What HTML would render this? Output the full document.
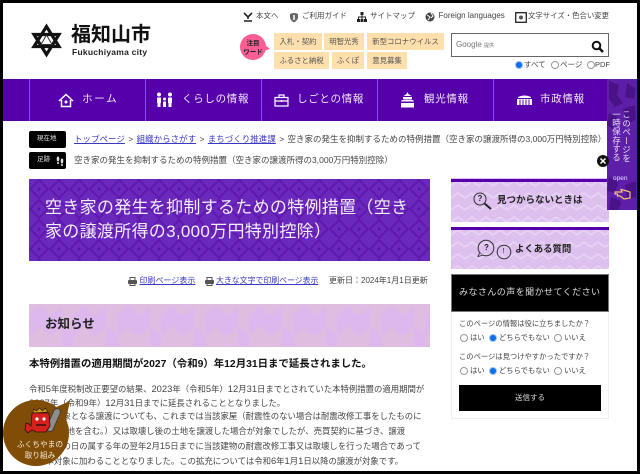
<!DOCTYPE html>
<html lang="ja"><head><meta charset="utf-8"><title>空き家の発生を抑制するための特例措置</title>
<style>
html,body{margin:0;padding:0;background:#000;}
#p{position:relative;width:640px;height:474px;overflow:hidden;background:#000;font-family:"Liberation Sans","Noto Sans CJK JP",sans-serif;color:#333;}
#w{position:absolute;left:3px;top:3px;width:634px;height:468px;background:#fff;}
.a{position:absolute;white-space:nowrap;line-height:1;}
.t{font-size:7.500px;color:#444;}
.k{position:absolute;background:#ffe0ad;font-size:7.400px;color:#555;height:17px;line-height:17px;text-align:center;white-space:nowrap;}
.n{position:absolute;font-size:10.500px;color:#f0e8f8;letter-spacing:.7px;white-space:nowrap;line-height:1;top:94px;}
.s{position:absolute;top:79px;width:1px;height:42px;background:#8a55c8;}
.l{color:#3a3ac0;text-decoration:underline;}
.bc{font-size:8.500px;color:#444;}
.g{margin:0 1px;}
svg{position:absolute;overflow:visible;}
.r{position:absolute;width:6px;height:6px;border-radius:50%;border:1px solid #999;background:#fff;box-sizing:content-box;}
.r.on{background:#0a6fe8;border-color:#9cc2ee;}
.q{font-size:7.300px;color:#444;}
.body{font-size:8.400px;color:#444;left:29px;}
.d{font-size:9.400px;}
</style></head><body><div id="p"><div id="w"></div>

<!-- logo -->
<svg style="left:26px;top:18px" width="44" height="44" viewBox="0 0 44 44"><path d="M20.500 8.500 33 28.500H8Z M20.500 36.500 33 16.500H8Z" fill="none" stroke="#111" stroke-width="3.200"/><path d="M20.500 17 26 26.500H15Z" fill="none" stroke="#333" stroke-width="1"/></svg>
<div class="a" style="left:71px;top:25px;font-size:20px;font-weight:bold;color:#111;">福知山市</div>
<div class="a" style="left:72px;top:48px;font-size:8.500px;font-weight:bold;color:#222;letter-spacing:.25px;">Fukuchiyama city</div>

<!-- top links -->
<svg style="left:243px;top:12px" width="10" height="10"><path d="M1 1 5 5 9 1M5 5V7M1 9H9" fill="none" stroke="#222" stroke-width="1.600"/></svg>
<div class="a t" style="left:256px;top:12px;">本文へ</div>
<svg style="left:289px;top:12px" width="10" height="11"><path d="M1 2Q5 0 9 2V6Q8 9 5 10.500 2 9 1 6Z" fill="#666"/><path d="M5 3V8" stroke="#fff" stroke-width="1.500"/></svg>
<div class="a t" style="left:302px;top:12px;">ご利用ガイド</div>
<svg style="left:357px;top:12px" width="10" height="11"><path d="M3.500 0h3v3h-3zM0 7h3v3H0zM3.500 7h3v3h-3zM7 7h3v3H7z" fill="#222"/><path d="M5 3v4M1.500 7V5h7v2" fill="none" stroke="#222"/></svg>
<div class="a t" style="left:370px;top:12px;">サイトマップ</div>
<svg style="left:425px;top:12px" width="10" height="10"><circle cx="5" cy="5" r="4.500" fill="#444"/><path d="M2 3 5 5 3 8M6 1 8 4 6 6" fill="none" stroke="#fff"/></svg>
<div class="a" style="left:438.500px;top:12px;font-size:8px;color:#444;">Foreign languages</div>
<svg style="left:515px;top:12px" width="12" height="11"><rect x=".7" y=".7" width="10.600" height="9.600" fill="none" stroke="#222" stroke-width="1.300"/><circle cx="6" cy="5.500" r="2" fill="#555"/></svg>
<div class="a" style="left:528px;top:12px;font-size:7.400px;color:#444;">文字サイズ・色合い変更</div>

<!-- keywords -->
<svg style="left:240px;top:33px" width="32" height="29"><circle cx="13" cy="14" r="13" fill="#fb5e93"/><path d="M24 11l6 5-7 2Z" fill="#fb5e93"/></svg>
<div class="a" style="left:240px;top:39px;width:26px;text-align:center;font-size:6.500px;font-weight:bold;color:#222;line-height:9px;white-space:normal;">注目<br>ワード</div>
<div class="k" style="left:274px;top:33px;width:48px;">入札・契約</div>
<div class="k" style="left:324px;top:33px;width:40px;">明智光秀</div>
<div class="k" style="left:367px;top:33px;width:77px;">新型コロナウイルス</div>
<div class="k" style="left:274px;top:52px;width:55px;">ふるさと納税</div>
<div class="k" style="left:332px;top:52px;width:32px;">ふくぽ</div>
<div class="k" style="left:367px;top:52px;width:40px;">意見募集</div>

<!-- search -->
<div style="position:absolute;left:451px;top:33px;width:156px;height:22px;border:1px solid #666;box-sizing:content-box;background:#fff;"></div>
<div class="a" style="left:456px;top:41px;font-size:8px;color:#777;">Google <span style="font-size:5px;">提供</span></div>
<svg style="left:591px;top:40px" width="13" height="13"><circle cx="5.500" cy="5.500" r="3.800" fill="none" stroke="#111" stroke-width="2"/><path d="M8.500 8.500 12 12" stroke="#111" stroke-width="2.500"/></svg>
<div class="r on" style="left:515px;top:61px"></div><div class="a t" style="left:524px;top:61px;">すべて</div>
<div class="r" style="left:551px;top:61px"></div><div class="a t" style="left:560px;top:61px;">ページ</div>
<div class="r" style="left:587px;top:61px"></div><div class="a t" style="left:595px;top:61px;">PDF</div>

<!-- nav -->
<div style="position:absolute;left:3px;top:79px;width:604px;height:42px;background:#5500aa;"></div>
<div class="s" style="left:29px"></div><div class="s" style="left:145px"></div><div class="s" style="left:261px"></div><div class="s" style="left:377px"></div><div class="s" style="left:493px"></div>
<svg style="left:58px;top:93px" width="16" height="15"><path d="M1 8 8 1.500 15 8M3.500 7V13.500H12.500V7" fill="none" stroke="#fff" stroke-width="1.500"/><circle cx="8" cy="9" r="1.500" fill="#fff"/></svg>
<div class="n" style="left:82px;letter-spacing:1.700px;">ホーム</div>
<svg style="left:156px;top:92px" width="17" height="16" fill="#fff"><circle cx="3" cy="2.500" r="2"/><circle cx="14" cy="2.500" r="2"/><circle cx="8.500" cy="7" r="1.500"/><path d="M1 5.500h4V11H4.500v4h-3v-4H1zM12 5.500h4V11h-.5v4h-3v-4H12zM7 9.500h3V15H7z"/></svg>
<div class="n" style="left:182px;">くらしの情報</div>
<svg style="left:274px;top:93px" width="15" height="14"><path d="M1 4.500H14V13H1ZM1 8H14M5 4.500V2H10V4.500M7.500 7V9" fill="none" stroke="#fff" stroke-width="1.200"/></svg>
<div class="n" style="left:297px;">しごとの情報</div>
<svg style="left:400px;top:92px" width="15" height="16" fill="#fff"><path d="M7.500 0 8.500 2 11.500 4H3.500L6.500 2ZM3 5h9v2H3zM1.500 8.500 4 7.500h7l2.500 1 .5 1H1zM1 11h13v4.500H1z"/></svg>
<div class="n" style="left:424px;">観光情報</div>
<svg style="left:517px;top:95px" width="15" height="10" fill="#fff"><path d="M1 2Q7.500-1 14 2V3H1zM0 4h15V10H0z"/><path d="M3 4.500v5.500M6 4.500v5.500M9 4.500v5.500M12 4.500v5.500" stroke="#5500aa" stroke-width="1"/></svg>
<div class="n" style="left:540px;">市政情報</div>

<!-- breadcrumb -->
<div style="position:absolute;left:29px;top:131px;width:37px;height:17px;background:#000;border-radius:2px;"></div>
<div class="a" style="left:37px;top:136px;font-size:6.500px;color:#ddd;">現在地</div>
<div class="a bc" style="left:74px;top:135px;"><span class="l">トップページ</span> <span class="g">&gt;</span> <span class="l">組織からさがす</span> <span class="g">&gt;</span> <span class="l">まちづくり推進課</span> <span class="g">&gt;</span> 空き家の発生を抑制するための特例措置（空き家の譲渡所得の3,000万円特別控除）</div>
<div style="position:absolute;left:29px;top:152px;width:37px;height:17px;background:#000;border-radius:2px;"></div>
<div class="a" style="left:37px;top:157px;font-size:6.500px;color:#ddd;">足跡</div>
<svg style="left:56px;top:156px" width="8" height="10" fill="#ddd"><ellipse cx="2" cy="3" rx="1.300" ry="2.500"/><ellipse cx="6" cy="5" rx="1.300" ry="2.500"/><circle cx="2" cy="7" r="1"/><circle cx="6" cy="9" r="1"/></svg>
<div class="a bc" style="left:74px;top:156px;">空き家の発生を抑制するための特例措置（空き家の譲渡所得の3,000万円特別控除）</div>

<!-- title -->
<svg style="left:29px;top:179px" width="401" height="82"><defs><pattern id="d" width="20" height="20" patternUnits="userSpaceOnUse"><rect width="20" height="20" fill="#6a28bc"/><path d="M10 1 19 10 10 19 1 10Z" fill="none" stroke="#6018ae" stroke-width="2"/><circle cx="10" cy="10" r="1.500" fill="#5c14aa"/></pattern></defs><rect width="401" height="82" fill="url(#d)"/></svg>
<div class="a" style="left:45px;top:196px;font-size:17px;color:#f3ecfb;letter-spacing:.3px;line-height:24px;">空き家の発生を抑制するための特例措置（空き<br>家の譲渡所得の3,000万円特別控除）</div>

<!-- print row -->
<svg style="left:128px;top:277px" width="9" height="9"><rect x="0" y="3" width="9" height="4" rx="1" fill="#555"/><rect x="2" y="0.500" width="5" height="8" fill="none" stroke="#555"/></svg>
<div class="a" style="left:139.500px;top:277px;font-size:8px;"><span class="l">印刷ページ表示</span></div>
<svg style="left:205px;top:277px" width="9" height="9"><rect x="0" y="3" width="9" height="4" rx="1" fill="#555"/><rect x="2" y="0.500" width="5" height="8" fill="none" stroke="#555"/></svg>
<div class="a" style="left:216px;top:277px;font-size:7.900px;"><span class="l">大きな文字で印刷ページ表示</span></div>
<div class="a" style="left:329px;top:277px;font-size:8px;color:#444;">更新日：2024年1月1日更新</div>

<!-- notice -->
<svg style="left:29px;top:304px" width="401" height="43"><defs><pattern id="z" width="44" height="43" patternUnits="userSpaceOnUse"><rect width="44" height="43" fill="#dfbde0"/><path d="M0 12 11 2V22L0 32ZM11 2 22 12V32L11 22ZM22 12 33 2V22L22 32Z" fill="#dcb8ee"/><path d="M33 22 44 32V43H33Z" fill="#dcb8ee"/></pattern></defs><rect width="401" height="43" fill="url(#z)"/></svg>
<div class="a" style="left:45px;top:318px;font-size:12.500px;font-weight:bold;color:#222;">お知らせ</div>

<div class="a" style="left:29px;top:360px;font-size:10.400px;font-weight:bold;color:#111;">本特例措置の適用期間が2027（令和9）年12月31日まで延長されました。</div>
<div class="a body" style="top:384px;">令和<span class="d">5</span>年度税制改正要望の結果、<span class="d">2023</span>年（令和<span class="d">5</span>年）<span class="d">12</span>月<span class="d">31</span>日までとされていた本特例措置の適用期間が</div>
<div class="a body" style="top:398px;"><span class="d">2027</span>年（令和<span class="d">9</span>年）<span class="d">12</span>月<span class="d">31</span>日までに延長されることとなりました。</div>
<div class="a body" style="top:412px;">また、対象となる譲渡についても、これまでは当該家屋（耐震性のない場合は耐震改修工事をしたものに</div>
<div class="a body" style="top:427px;">限る。）敷地を含む。）又は取壊し後の土地を譲渡した場合が対象でしたが、売買契約に基づき、譲渡</div>
<div class="a body" style="top:441px;">契約締結の日の属する年の翌年<span class="d">2</span>月<span class="d">15</span>日までに当該建物の耐震改修工事又は取壊しを行った場合であって</div>
<div class="a body" style="top:456px;">も、本対象に加わることとなりました。この拡充については令和<span class="d">6</span>年<span class="d">1</span>月<span class="d">1</span>日以降の譲渡が対象です。</div>

<!-- badge -->
<svg style="left:0;top:396px" width="76" height="76"><circle cx="36" cy="37" r="33" fill="#7f4d05"/><path d="M54 12 70 5 64 32Z" fill="#7f4d05"/>
<path d="M50 32 57 16" stroke="#333" stroke-width="7.500" stroke-linecap="round"/><path d="M50 32 57 16" stroke="#8d8d8d" stroke-width="6" stroke-linecap="round"/>
<path d="M33 17l.5-4 3 2 3-3 3 3 3-3 2 4Z" fill="#c99a18" stroke="#301000" stroke-width=".6"/>
<path d="M32 17H49L50 30 46 36H36L32 34 28 37 25 34 26 27 29 28 31 30Z" fill="#d5201c" stroke="#301010" stroke-width=".8"/>
<circle cx="37" cy="23" r="1.600" fill="#fff"/><circle cx="44" cy="23" r="1.600" fill="#fff"/><path d="M36 29H46" stroke="#301010" stroke-width="1.500"/></svg>
<div class="a" style="left:4px;top:439px;width:72px;text-align:center;font-size:7.700px;line-height:11px;color:#f6ecd8;">ふくちやまの<br>取り組み</div>

<!-- sidebar -->
<svg style="left:451px;top:178px" width="158" height="44"><defs><pattern id="c" width="14" height="12" patternUnits="userSpaceOnUse"><rect width="14" height="12" fill="#ddc0ee"/><path d="M0 8 7 3 14 8" fill="none" stroke="#e6d0f4" stroke-width="2"/></pattern></defs><rect width="158" height="44" fill="url(#c)"/><rect y="1" width="158" height="3" fill="#5500aa"/></svg>
<svg style="left:473px;top:192px" width="20" height="19"><circle cx="7" cy="7" r="6" fill="none" stroke="#333"/><path d="M11.500 11.500 18 17" stroke="#222" stroke-width="2"/></svg>
<div class="a" style="left:477.500px;top:195px;font-size:8px;color:#222;font-weight:bold;">?</div>
<div class="a" style="left:497px;top:196px;font-size:9.500px;font-weight:bold;color:#222;">見つからないときは</div>

<svg style="left:451px;top:227px" width="158" height="42"><rect width="158" height="42" fill="url(#c)"/><rect width="158" height="3" fill="#5500aa"/></svg>
<svg style="left:477px;top:239px" width="36" height="20"><circle cx="9" cy="9" r="7.800" fill="none" stroke="#333"/><path d="M2.500 14 1 17.500 6 16" fill="#ddc0ee" stroke="#333" stroke-width=".9"/><circle cx="27" cy="13" r="6.800" fill="none" stroke="#333"/></svg>
<div class="a" style="left:484px;top:244px;font-size:8px;color:#222;font-weight:bold;">?</div>
<div class="a" style="left:502.500px;top:248px;font-size:7px;color:#222;">!</div>
<div class="a" style="left:515px;top:244px;font-size:9.400px;font-weight:bold;color:#222;">よくある質問</div>

<div style="position:absolute;left:451px;top:274px;width:158px;height:38px;background:#000;border:1px solid #777;box-sizing:border-box;"></div>
<div class="a" style="left:459px;top:287.500px;font-size:9px;color:#ddd;letter-spacing:.45px;">みなさんの声を聞かせてください</div>
<div style="position:absolute;left:451px;top:312px;width:158px;height:107px;border:1px solid #eee;border-top:0;box-sizing:border-box;background:#fff;"></div>
<div class="a q" style="left:459px;top:320px;">このページの情報は役に立ちましたか？</div>
<div class="r" style="left:460px;top:334px"></div><div class="a q" style="left:470px;top:334px;">はい</div>
<div class="r on" style="left:489px;top:334px"></div><div class="a q" style="left:499px;top:334px;">どちらでもない</div>
<div class="r" style="left:554px;top:334px"></div><div class="a q" style="left:564px;top:334px;">いいえ</div>
<div class="a q" style="left:459px;top:353px;">このページは見つけやすかったですか？</div>
<div class="r" style="left:460px;top:367px"></div><div class="a q" style="left:470px;top:367px;">はい</div>
<div class="r on" style="left:489px;top:367px"></div><div class="a q" style="left:499px;top:367px;">どちらでもない</div>
<div class="r" style="left:554px;top:367px"></div><div class="a q" style="left:564px;top:367px;">いいえ</div>
<div style="position:absolute;left:459px;top:385px;width:142px;height:26px;background:#000;"></div>
<div class="a" style="left:459px;top:394px;width:142px;text-align:center;font-size:7.500px;color:#ddd;">送信する</div>

<!-- side tab -->
<svg style="left:607px;top:79px" width="30" height="131"><rect width="30" height="131" fill="#5e1fa8"/><g fill="#4a1288"><path d="M2 2 12 6 10 16 16 24 8 28 2 20Z"/><path d="M20 4 29 10 27 20 18 18Z"/><path d="M16 30 28 26 29 40 20 46Z"/><path d="M2 34 10 38 6 50 0 46Z"/><path d="M2 98 12 102 8 114 0 112Z"/><path d="M18 106 29 102 29 118 20 120Z"/><path d="M4 118 14 122 12 131 2 131Z"/></g></svg>
<div class="a" style="left:622px;top:110px;writing-mode:vertical-rl;font-size:8.500px;letter-spacing:.3px;color:#e9def6;">このページを</div>
<div class="a" style="left:612px;top:110px;writing-mode:vertical-rl;font-size:8.500px;letter-spacing:.1px;color:#e9def6;">一時保存する</div>
<div class="a" style="left:613px;top:176px;font-size:6.500px;color:#e9def6;">open</div>
<svg style="left:614px;top:188px" width="17" height="12"><path d="M1 4H8L7 1.500 13 3 16 4V10L10 11 6 8H3.500V6H1Z" fill="none" stroke="#f0c278" stroke-width="1.200"/></svg>
<svg style="left:597px;top:155px" width="12" height="12"><circle cx="6" cy="6" r="6" fill="#111"/><path d="M3.500 3.500 8.500 8.500M8.500 3.500 3.500 8.500" stroke="#fff" stroke-width="1.500"/></svg>
</div></body></html>
